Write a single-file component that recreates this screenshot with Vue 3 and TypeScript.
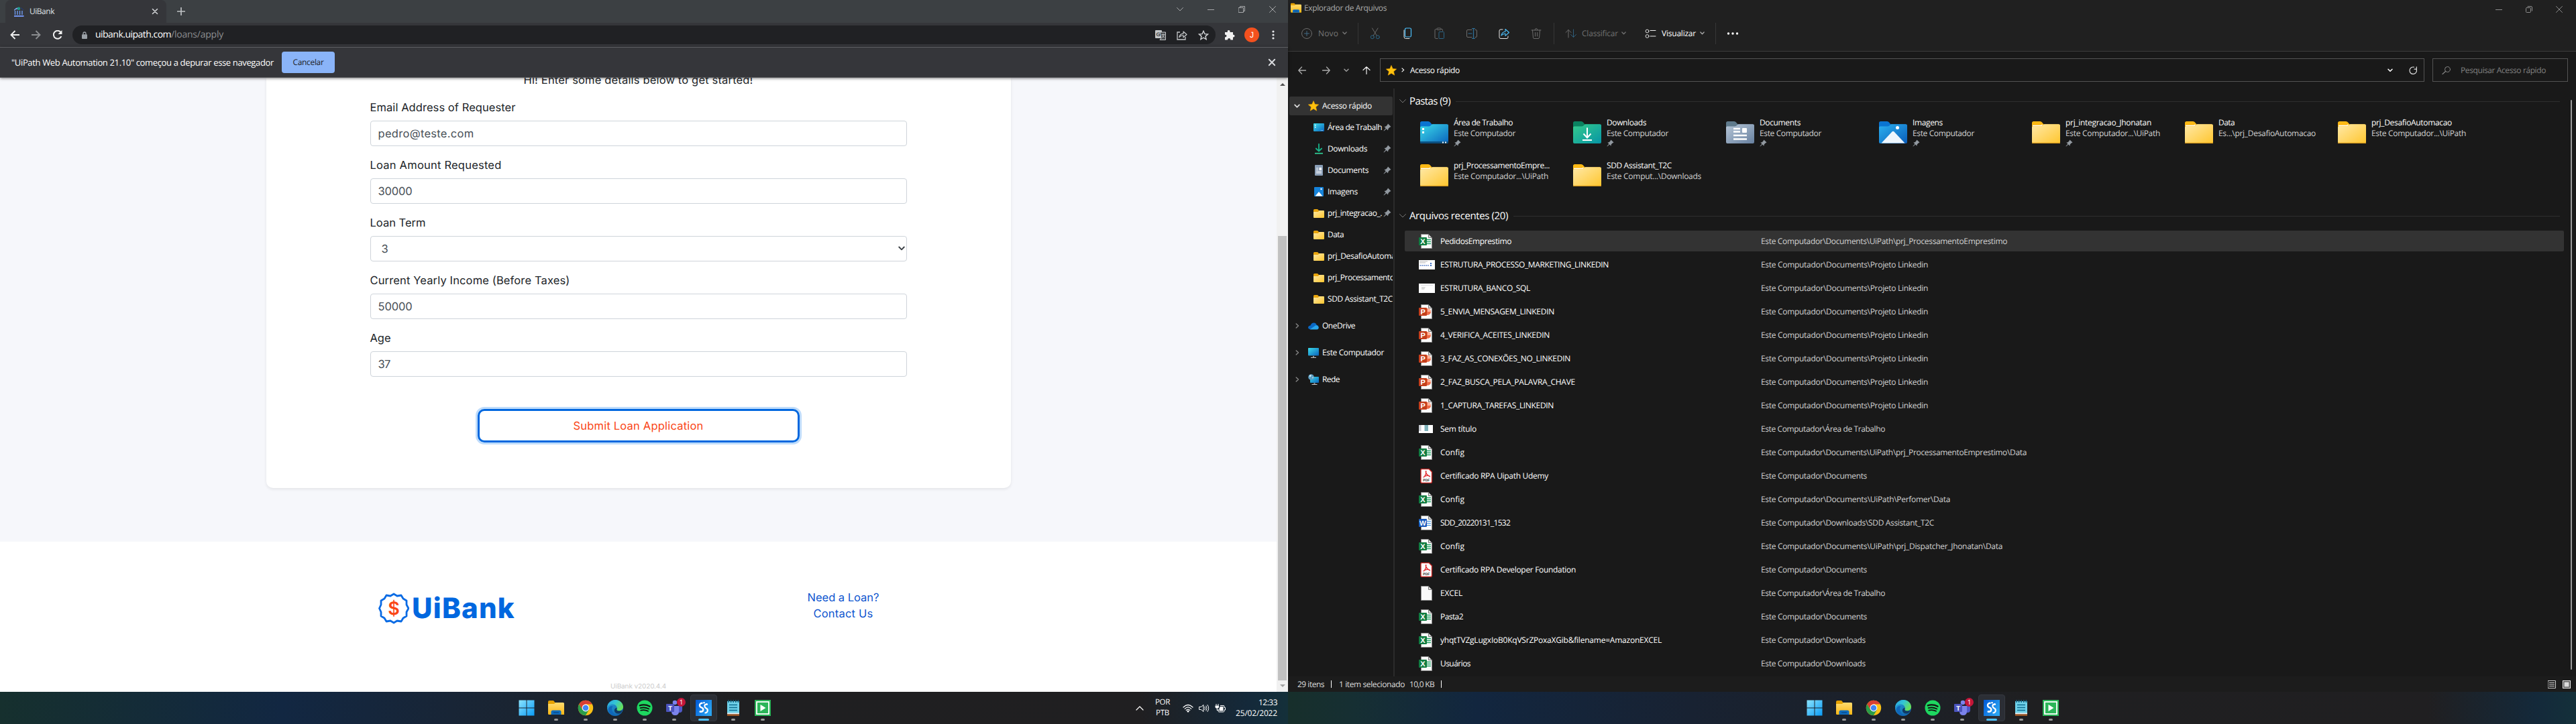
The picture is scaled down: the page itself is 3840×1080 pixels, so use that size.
<script setup lang="ts">
import { h } from 'vue'

// Icon library: [width, height, markup]
const S = 'fill="none" stroke-linecap="round" stroke-linejoin="round"'
const page = '<path d="M3.5.5H14.500L19.500 5.500V21.500H3.500Z" fill="#fafafa" stroke="#8a8a8a"/><path d="M14.500.5V5.500H19.500Z" fill="#ddd" stroke="#777"/>'
const folderBack = (c: string) => `<path d="M0 2.500Q0 0 2.500 0H12Q14 0 15 1.500L17.500 4.500H40V10H0Z" fill="${c}"/>`
const folderFront = (c: string) => `<path d="M0 9Q0 7.500 2 7.500H13Q15 7.500 16.500 5.500Q17.500 4.300 19 4.300H40Q42 4.300 42 6V31Q42 33 40 33H2Q0 33 0 31Z" fill="${c}"/>`
const lib: Record<string, [number, number, string]> = {
  bank: [16, 15, '<path d="M1 4.500Q5 0 9 1.500L10 4Q5 2.500 1 6Z" fill="#7fa8f0"/><circle cx="8" cy="2.800" r="2.200" fill="#1c9d8b"/><path d="M2.500 6V12M6 6V12M9.500 6V12M13 6V12" stroke="#6f9bf0" stroke-width="1.400"/><path d="M1 14H15.500" stroke="#7396f2" stroke-width="2"/><path d="M11 1.500L15 5" stroke="#1c3f8f"/>'],
  close: [10, 10, `<path d="M1.500 1.500L8.500 8.500M8.500 1.500L1.500 8.500" ${S} stroke="currentColor" stroke-width="1.600"/>`],
  winx: [10, 10, `<path d="M.5.500L9.500 9.500M9.500.500L.5 9.500" ${S} stroke="currentColor" stroke-width="1"/>`],
  winmin: [10, 10, '<path d="M0 5.500H10" stroke="currentColor"/>'],
  winres: [10, 10, `<path d="M.5 2.500H7.500V9.500H.5ZM2.500 2.500V.5H9.500V7.500H7.500" ${S} stroke="currentColor"/>`],
  winres11: [10, 10, `<rect x=".5" y="2.500" width="7" height="7" rx="1" ${S} stroke="currentColor"/><path d="M3 .5H8Q9.500.5 9.500 2V7" ${S} stroke="currentColor"/>`],
  plus: [12, 12, '<path d="M6 0V12M0 6H12" stroke="currentColor" stroke-width="1.700"/>'],
  back: [14, 14, '<path d="M14 7H1.500M7.500 1L1.500 7L7.500 13" fill="none" stroke="currentColor" stroke-width="1.900"/>'],
  fwd: [14, 14, '<path d="M0 7H12.500M6.500 1L12.500 7L6.500 13" fill="none" stroke="currentColor" stroke-width="1.900"/>'],
  reload: [14, 14, '<path d="M12.400 9.200A6 6 0 1 1 11.500 3" fill="none" stroke="currentColor" stroke-width="2"/><path d="M13.500 0V6H7.500Z" fill="currentColor"/>'],
  lock: [8, 11, '<path d="M2 5V3.200Q2 1 4 1Q6 1 6 3.200V5" fill="none" stroke="#9aa0a6" stroke-width="1.300"/><rect y="4.200" width="8" height="6.800" rx="1" fill="#9aa0a6"/>'],
  chev: [10, 6, `<path d="M.5.500L5 5L9.500.500" ${S} stroke="currentColor" stroke-width="1"/>`],
  caret: [12, 7, `<path d="M1 6L6 1L11 6" ${S} stroke="currentColor" stroke-width="1.200"/>`],
  chevb: [8, 6, `<path d="M1 1.200L4 4.300L7 1.200" ${S} stroke="currentColor" stroke-width="1.500"/>`],
  chevr: [6, 8, `<path d="M1.200 1L4.500 4L1.200 7" ${S} stroke="currentColor" stroke-width="1.400"/>`],
  translate: [16, 15, '<rect width="10" height="12" rx="1" fill="#c4c7c9"/><path d="M7 3H15.500V14.500H7L9 12Z" fill="#4a4d50" stroke="#c4c7c9"/><text x="1.500" y="9" font-family="Liberation Sans" font-size="8" font-weight="bold" fill="#303134">G</text><path d="M9.500 6.500H14.500M12 5.500V6.500M13.500 6.500Q12.500 10 10 11.500M10.500 7.500Q12 10 14 11.500" fill="none" stroke="#c4c7c9" stroke-width=".9"/>'],
  share: [16, 15, `<path d="M5 3H1V14H13V10" fill="none" stroke="#c4c7c9" stroke-width="1.300"/><path d="M3.800 10.500Q5 5.500 10 5.200V2L15 6.500L10 10.800V7.800Q6.500 7.500 3.800 10.500Z" ${S} stroke="#c4c7c9" stroke-width="1.200"/>`],
  starline: [16, 15, '<path d="M8 1.300L9.900 5.600L14.600 6L11 9.100L12.100 13.700L8 11.200L3.900 13.700L5 9.100L1.400 6L6.100 5.600Z" fill="none" stroke="#d3d5d8" stroke-width="1.400"/>'],
  puzzle: [16, 16, '<path d="M1 4H4.800Q4.300 1 6.600 1Q8.900 1 8.500 4H13V7.800Q15.500 7.500 15.500 9.600Q15.500 11.800 13 11.400V15.500H9.300Q9.400 13 7 13Q4.800 13 4.900 15.500H1V11.500Q3.500 11.500 3.500 9.500Q3.500 7.600 1 7.700Z" fill="#f1f1f1"/>'],
  vdots: [4, 14, '<circle cx="2" cy="2" r="1.600" fill="#e8eaed"/><circle cx="2" cy="7" r="1.600" fill="#e8eaed"/><circle cx="2" cy="12" r="1.600" fill="#e8eaed"/>'],
  badge: [46, 47, '<path d="M23 2L28 5L34 4L37 9L42 12L42 18L45 23.500L42 29L42 35L37 38L34 43L28 42L23 45L18 42L12 43L9 38L4 35L4 29L1.500 23.500L4 18L4 12L9 9L12 4L18 5Z" fill="none" stroke="#0a6be4" stroke-width="2.800" stroke-linejoin="round"/><path d="M33 9L39 18" stroke="#fff" stroke-width="3"/><text x="23" y="33" text-anchor="middle" font-family="Inter, sans-serif" font-size="27" font-weight="600" fill="#fa4616">$</text>'],
  files: [24, 24, '<path d="M0 3Q0 1 2 1H8L10.500 4H22V8H0Z" fill="#e5a100"/><path d="M0 6H9L11 4H22.500Q24 4 24 5.500V22H1.500Q0 22 0 20.500Z" fill="url(#gYel)"/><path d="M4.500 22V18Q4.500 15.500 7 15.500H17Q19.500 15.500 19.500 18V22Z" fill="#0f6cbd"/><path d="M8 18.800H16" stroke="#0a4f90" stroke-width="1.500"/>'],
  win: [24, 24, '<path d="M.5.500H11.500V11.500H.5ZM12.500.500H23.500V11.500H12.500ZM.5 12.500H11.500V23.500H.5ZM12.500 12.500H23.500V23.500H12.500Z" fill="url(#gWin)"/>'],
  chrome: [24, 24, '<circle cx="12" cy="12" r="11.200" fill="#fbc116"/><path d="M2.300 6.400A11.200 11.200 0 0 1 21.700 6.400H12L7.200 14.800Z" fill="#d93f33"/><path d="M2.300 6.400A11.200 11.200 0 0 0 12 23.200L16.900 14.800L12 12L7.200 14.800Z" fill="#2a9d4a"/><circle cx="12" cy="12" r="5.400" fill="#fff"/><circle cx="12" cy="12" r="4.300" fill="#4285f4"/>'],
  edge: [24, 24, '<circle cx="12" cy="12" r="12" fill="url(#gEdge)"/><path d="M0 11C1 4 7 0 12 0C19 0 24 5 24 10.500C24 14 21 16.500 17.500 16.500C14.500 16.500 14 15 14.500 13.500C15.500 9.500 12 6.500 8.500 6.500C4 6.500 1 9 0 11Z" fill="url(#gEdge2)"/><path d="M14.300 14Q14.500 16.500 18 16.500Q20.500 16.500 22.500 15.500Q21.500 20 17 20.500Q12.500 20.500 11 17Q10 13 14.500 11.500Q14.800 12.800 14.300 14Z" fill="#123a63"/><path d="M8.500 9.500Q5.500 14 9 19Q11 22 14.500 23.500Q7 24.500 3 19Q0 14.500 3.500 10.500Q5.500 8.500 8.500 9.500Z" fill="#0f67b9"/>'],
  spotify: [24, 24, '<circle cx="12" cy="12" r="11.500" fill="#1ed760"/><path d="M4.800 8.400Q12.500 6 19.500 9.800" stroke="#111" stroke-width="2.300" fill="none" stroke-linecap="round"/><path d="M5.600 12.200Q12 10.300 18.300 13.500M6.300 15.700Q12 14.200 17 16.800" stroke="#111" stroke-width="1.800" fill="none" stroke-linecap="round"/>'],
  teams: [24, 24, '<circle cx="13" cy="4" r="3.300" fill="#7b83eb"/><circle cx="20.500" cy="5" r="2.500" fill="#5059c9"/><path d="M17 9H24V15Q24 19 20 19H16Z" fill="#5059c9"/><path d="M8 9H19V17Q19 23 13.500 23Q8 23 8 17Z" fill="#7b83eb"/><rect y="6" width="12" height="12" rx="1" fill="#4b53bc"/><text x="6" y="15.500" text-anchor="middle" font-family="Liberation Sans" font-size="10" font-weight="bold" fill="#fff">T</text>'],
  studio: [24, 24, '<rect width="24" height="24" fill="url(#gStu)"/><path d="M10.500 4.800Q5.800 5 6 8.300Q6.300 10.800 9 11.500Q11.500 12.500 11.300 15Q11 17.500 7.500 17.800" stroke="#fff" stroke-width="2.400" fill="none"/><path d="M16.500 6.500Q13.300 6.500 13.300 9.200Q13.500 11.500 15.700 12.500Q18 13.500 17.800 16Q17.500 19.300 13.500 19.500" stroke="#fff" stroke-width="2.200" fill="none"/><circle cx="12.500" cy="4.200" r="1.300" fill="#fff"/><circle cx="16.500" cy="6.500" r="1.600" fill="#fff"/><circle cx="7" cy="17.500" r="1.500" fill="#fff"/>'],
  notepad: [24, 24, '<path d="M3 2H21V21H3Z" fill="#6fd0e8"/><path d="M3 19.500H21V21.500H3Z" fill="#eee"/><path d="M3 21.500H21V23.800H3Z" fill="#a85a24"/><path d="M5 0V4M8.600 0V4M12.200 0V4M15.800 0V4M19.400 0V4" stroke="#0e5f7d" stroke-width="1.500"/><path d="M6 7.500H18M6 11.500H18M6 15.500H18" stroke="#0c6c91" stroke-width="1.500"/>'],
  assist: [24, 24, '<rect width="24" height="24" fill="#2bb558"/><rect x="3" y="3" width="18" height="18" fill="#2bb558" stroke="#fff" stroke-width="1.800"/><path d="M8.500 7L16.500 12L8.500 17Z" fill="#fff"/>'],
  wifi: [16, 13, `<path d="M1 5Q8-2 15 5M3.200 7.300Q8 2.500 12.800 7.300M5.300 9.500Q8 6.800 10.700 9.500" ${S} stroke="#fff" stroke-width="1.200"/><circle cx="8" cy="11" r="1.500" fill="#fff"/>`],
  speaker: [16, 13, `<path d="M1 4.500H3.500L7 1.500V11.500L3.500 8.500H1Z" ${S} stroke="#fff"/><path d="M9 4.500Q10.200 6.500 9 8.500M11 3Q13.300 6.500 11 10M13 1.500Q16.600 6.500 13 11.500" ${S} stroke="#fff"/>`],
  battery: [16, 13, '<path d="M2 0V2.500M5 0V2.500" stroke="#fff"/><path d="M.5 2.500H6V5Q6 6.500 3.300 6.500Q.5 6.500.5 5Z" fill="#fff"/><path d="M3.200 6V9.500H5.500" fill="none" stroke="#fff"/><path d="M8 2.500H13Q14 2.500 14 4V5.500H15.500V9H14V10.500Q14 12 12.500 12H6Q5 12 5 10.500V8" fill="none" stroke="#fff"/><path d="M7.500 4H12.500V10.500H6.500V7Q7.500 6 7.500 4Z" fill="#fff"/>'],
  star: [16, 16, '<path d="M8 0.500L10.200 5.600L15.700 6L11.500 9.700L12.800 15.200L8 12.300L3.200 15.200L4.500 9.700L.3 6L5.800 5.600Z" fill="#ffc20e" stroke="#eca400" stroke-width=".6"/>'],
  newc: [18, 18, `<circle cx="9" cy="9" r="7.500" ${S} stroke="#6c6c6c"/><path d="M9 5.500V12.500M5.500 9H12.500" ${S} stroke="#426b85"/>`],
  cut: [18, 18, `<path d="M4.500 1L11.500 12.500M13 1L6 12.500" ${S} stroke="#6c6c6c"/><circle cx="4.800" cy="14.300" r="2.500" ${S} stroke="#2b6485"/><circle cx="12.900" cy="14.300" r="2.500" ${S} stroke="#2b6485"/>`],
  copy: [18, 18, `<path d="M4 4V14Q4 16.500 6.500 16.500H12" ${S} stroke="#e0e0e0"/><rect x="5.500" y="1" width="9" height="13" rx="1.800" ${S} stroke="#4cc2ff" stroke-width="1.200"/>`],
  paste: [18, 18, `<path d="M13.500 5V3.500Q13.500 2.500 12 2.500H3.500Q2 2.500 2 4V15Q2 16.500 3.500 16.500H6" ${S} stroke="#6c6c6c"/><rect x="5" y="1" width="6" height="2.500" rx="1" fill="#202020" stroke="#6c6c6c"/><rect x="8" y="6.500" width="7.500" height="10" rx="1" ${S} stroke="#2b6485"/>`],
  rename: [18, 18, `<path d="M9 3.500H3Q1.500 3.500 1.500 5V13Q1.500 14.500 3 14.500H9M14 3.500H15Q16.500 3.500 16.500 5V13Q16.500 14.500 15 14.500H14" ${S} stroke="#6c6c6c"/><path d="M11.500 1.500V16.500M9.500 1.500H13.500M9.500 16.500H13.500M4 9H9" ${S} stroke="#2f719a" stroke-width="1.200"/>`],
  xshare: [18, 18, `<path d="M7 3H4Q2 3 2 5V14.500Q2 16.500 4 16.500H13Q15 16.500 15 14.500V13" ${S} stroke="#e8e8e8"/><path d="M5 12Q6 6.500 11 6.300V2.500L16.500 7.500L11 12.300V9.200Q7.500 9 5 12Z" ${S} stroke="#4cc2ff" stroke-width="1.100"/>`],
  trash: [18, 18, `<path d="M2 4H16M7 4Q7 1.500 9 1.500Q11 1.500 11 4M3.500 4L4.500 15.500Q4.600 16.500 6 16.500H12Q13.400 16.500 13.500 15.500L14.500 4M7.500 7.500V13M10.500 7.500V13" ${S} stroke="#6c6c6c"/>`],
  sort: [18, 14, `<path d="M5 13V1.500M1 5.500L5 1.500L9 5.500" ${S} stroke="#6c6c6c"/><path d="M12.500 1V12.500M8.500 8.500L12.500 12.500L16.500 8.500" ${S} stroke="#2f5f7c"/>`],
  view: [17, 14, `<circle cx="3.500" cy="3.500" r="2.400" ${S} stroke="#ddd"/><circle cx="3.500" cy="11" r="2.400" ${S} stroke="#ddd"/><path d="M8 2.500H16M8 11H16" ${S} stroke="#eee"/>`],
  hdots: [18, 4, '<circle cx="2.500" cy="2" r="1.700" fill="#fff"/><circle cx="9" cy="2" r="1.700" fill="#fff"/><circle cx="15.500" cy="2" r="1.700" fill="#fff"/>'],
  xback: [12, 12, `<path d="M11.500 6H.8M5.500 1L.8 6L5.500 11" ${S} stroke="#aaa" stroke-width="1.300"/>`],
  xfwd: [12, 12, `<path d="M.5 6H11.200M6.500 1L11.200 6L6.500 11" ${S} stroke="#aaa" stroke-width="1.300"/>`],
  xup: [12, 12, `<path d="M6 11.500V.8M1 5.500L6 .8L11 5.500" ${S} stroke="#eee" stroke-width="1.200"/>`],
  xrefresh: [12, 12, `<path d="M11 4.200A5.200 5.200 0 1 1 7.500 1.200" ${S} stroke="#ddd" stroke-width="1.200"/><path d="M8 4.200H11.300V.8" ${S} stroke="#ddd" stroke-width="1.200"/>`],
  search: [14, 12, `<circle cx="8.500" cy="4.500" r="4" ${S} stroke="#888"/><path d="M5.500 7.500L1 11.500" ${S} stroke="#888" stroke-width="1.200"/>`],
  pin: [12, 12, '<path d="M7 .5L11.500 5L9.500 6L7.500 8L7 10.500L4.700 8.200L1 11.500L.5 11L3.800 7.300L1.500 5L4 4.500L6 2.500Z" fill="#9299a0"/>'],
  sdesk: [16, 12, '<rect width="16" height="12" rx="1" fill="url(#gDesk)"/><path d="M2 2H3.500V3.500H2ZM2 5H3.500V6.500H2Z" fill="#fff"/><path d="M11 10.500H12M13 10.500H14" stroke="#bde"/>'],
  sdown: [14, 16, `<path d="M7 1V11M2.800 7.500L7 11.500L11.200 7.500" ${S} stroke="#18b389" stroke-width="1.800"/><path d="M1 14.800H13" stroke="#2fc490" stroke-width="1.800"/>`],
  sdoc: [14, 16, '<rect x="1" width="12" height="16" rx="1" fill="#8b9fb7"/><path d="M3 5H6M3 7.500H6M3 10H11M3 12H11" stroke="#fff" stroke-width="1.200"/><path d="M7.500 4H11V8H7.500Z" fill="#fff"/>'],
  simg: [14, 14, '<rect width="14" height="14" rx="1" fill="#1583da"/><path d="M1.500 13.500L7 7L12.500 13.500Z" fill="#fff"/><circle cx="10.500" cy="3" r="1.200" fill="#fff"/>'],
  sfold: [16, 13, '<path d="M0 1.500Q0 0 1.500 0H6L8 2H14V6H0Z" fill="#e8a40c"/><path d="M0 4H7L8.500 2H15Q16 2 16 3V12Q16 13 15 13H1Q0 13 0 12Z" fill="url(#gFold)"/>'],
  cloud: [16, 11, '<path d="M2 10Q-1 9 .5 6Q1.500 4.500 3.500 4.500Q5 .5 8.500.5Q12 .5 12.700 4Q15.500 4 15.500 7Q15 10 12 10Z" fill="#0a68c4"/><path d="M2.500 10.500L9.500 5.500Q12 3.500 14 5Q16.500 7 15.500 9Q14.500 10.500 13 10.500Z" fill="#29a5ea"/>'],
  pc: [16, 15, '<rect width="16" height="11.500" rx=".8" fill="url(#gDesk)"/><path d="M8 12V14" stroke="#888" stroke-width="2"/><path d="M4 14.400H12" stroke="#ccc"/>'],
  net: [16, 16, '<rect x="3" y="4" width="13" height="9" rx=".8" fill="url(#gDesk)"/><path d="M9.500 13V15" stroke="#888" stroke-width="2"/><path d="M5.500 15.500H13.500" stroke="#ccc"/><circle cx="4.500" cy="4.500" r="4.300" fill="#5c9fc4"/><path d="M2 2Q4 0 5 2Q4 4.500 2 4.500ZM6 5L8 4L7 7Z" fill="#cfe6f2"/>'],
  fdesk: [42, 33, folderBack('#0a74d1') + folderFront('url(#gDesk)') + '<path d="M0 30H42V31.500Q42 33 40 33H2Q0 33 0 31.500Z" fill="#0b4f80"/><path d="M3 10H6V13H3ZM3 15H6V18H3ZM33 30.500H35V32.500H33ZM37 30.500H39V32.500H37Z" fill="#fff"/>'],
  fdown: [42, 33, folderBack('#0a8260') + folderFront('url(#gGreen)') + '<path d="M21 9.500V24M15.500 18.500L21 24.500L26.500 18.500M14 28H28" fill="none" stroke="#fff" stroke-width="2"/>'],
  fdoc: [42, 33, folderBack('#5f7a8c') + folderFront('url(#gGray)') + '<path d="M11 11H21M11 15.500H21M11 21H31M11 26.500H31" stroke="#fff" stroke-width="2.300"/><rect x="24" y="10" width="7" height="7" rx="1" fill="#fff"/>'],
  fimg: [42, 33, folderBack('#0a74d1') + folderFront('url(#gBlue)') + '<path d="M3.500 32.500L19.500 15.500Q21 14 22.500 15.500L38.500 32.500Z" fill="#eef6fd"/><circle cx="27.500" cy="9.500" r="2.500" fill="#fff"/>'],
  fold: [42, 33, folderBack('#fdb813') + folderFront('url(#gFold)') + '<path d="M1 6.500H13.500L15.500 5" stroke="#fff" stroke-width="1.500" fill="none"/><path d="M0 32.300H42" stroke="#d89a1c" stroke-width="1.200"/>'],
  xls: [22, 22, page + '<path d="M12 8.500H18M12 11.500H18M12 14.500H18" stroke="#21a366" stroke-width="1.400"/><rect y="5" width="12" height="12" rx="1" fill="#107c41"/><text x="6" y="15" text-anchor="middle" font-family="Liberation Sans" font-size="11" font-weight="bold" fill="#fff">X</text>'],
  ppt: [22, 22, page + '<circle cx="13" cy="11" r="5" fill="#ed6c47"/><path d="M13 11V6A5 5 0 0 1 18 11Z" fill="#ffb49c"/><rect y="5" width="12" height="12" rx="1" fill="#c43e1c"/><text x="6.200" y="15" text-anchor="middle" font-family="Liberation Sans" font-size="11" font-weight="bold" fill="#fff">P</text>'],
  doc: [22, 22, page + '<path d="M12 8.500H18M12 11.500H18M12 14.500H18" stroke="#2b8ce0" stroke-width="1.200"/><rect y="5" width="12" height="12" rx="1" fill="#185abd"/><text x="6" y="15" text-anchor="middle" font-family="Liberation Sans" font-size="10.500" font-weight="bold" fill="#fff">W</text>'],
  pdf: [22, 22, '<path d="M4.500.5H15L19.500 5V19.500Q19.500 21.500 17.500 21.500H4.500Q3 21.500 3 19.500V2.500Q3 .5 4.500.5Z" fill="#fafafa" stroke="#c5221f" stroke-width="1.300"/><path d="M11 4Q9.800 3 10.500 6Q11.500 9 15.500 11.500Q17.500 12.500 15.500 10.800Q11 9.500 7.500 12.500Q6 13.500 8.500 11.800Q11 8.500 11 4Z" fill="none" stroke="#e5252a" stroke-width="1.200"/><text x="11.300" y="19" text-anchor="middle" font-family="Liberation Sans" font-size="5" font-weight="bold" fill="#333">PDF</text>'],
  blank: [22, 22, page],
  thumbA: [24, 22, '<rect y="4" width="24" height="14" fill="#fff"/><path d="M1 6H13M1 8H10" stroke="#bbb"/><path d="M1.500 12H15" stroke="#5b82c9" stroke-width="1.500" stroke-dasharray="2 1"/><path d="M18 8V13" stroke="#3a6cc4" stroke-width="2" stroke-dasharray="2 1"/>'],
  thumbB: [24, 22, '<rect y="4" width="24" height="14" fill="#fff"/><path d="M3 6.500H21" stroke="#e3e3e6" stroke-width="1.500"/><path d="M4 9H10L8 13H4Z" fill="#ddd"/>'],
  thumbC: [24, 22, '<rect y="5" width="21" height="12" fill="#fff"/><path d="M0 5H3.500V14H0Z" fill="#c8ccd2"/><path d="M8.500 5H14V14H8.500Z" fill="#7fb3bb"/>'],
  lay1: [12, 12, `<rect x=".5" y=".5" width="11" height="11" ${S} stroke="#ccc"/><path d="M2 3.500H10M2 6H10M2 8.500H10" stroke="#ccc"/>`],
  lay2: [12, 12, `<rect x=".5" y=".5" width="11" height="11" fill="#555" stroke="#eee"/><rect x="2.500" y="2.500" width="7" height="7" fill="#ddd"/>`],
  tri: [8, 4, '<path d="M0 4L4 0L8 4Z" fill="currentColor"/>'],
  trid: [8, 4, '<path d="M0 0L4 4L8 0Z" fill="currentColor"/>'],
}
const Ico = (p: { n: string; w?: number }) => {
  const [w, ht, body] = lib[p.n]
  const width = Number(p.w ?? w)
  return h('svg', { viewBox: `0 0 ${w} ${ht}`, width, height: (ht * width) / w, innerHTML: body, style: 'flex:none;display:block' })
}
Ico.props = ['n', 'w']

// Spreads or tightens the letters of a text so that it takes the given width.
const vFit = {
  mounted(el: HTMLElement, b: { value: number }) {
    if (!b.value) return
    const n = [...(el.textContent ?? '')].length
    const w = el.getBoundingClientRect().width
    if (n > 0) el.style.letterSpacing = `${((b.value - w) / n).toFixed(3)}px`
  },
}

const fields = [
  { label: 'Email Address of Requester', lw: 217, value: 'pedro@teste.com', vw: 143 },
  { label: 'Loan Amount Requested', lw: 196, value: '30000', vw: 51 },
  { label: 'Loan Term', lw: 83, value: '3', vw: 9, select: true },
  { label: 'Current Yearly Income (Before Taxes)', lw: 298, value: '50000', vw: 51 },
  { label: 'Age', lw: 31, value: '37', vw: 18 },
]
const apps = ['win', 'files', 'chrome', 'edge', 'spotify', 'teams', 'studio', 'notepad', 'assist']
const tools = ['cut', 'copy', 'paste', 'rename', 'xshare', 'trash']
const side = [
  { icon: 'sdesk', text: 'Área de Trabalh', w: 81, pin: true },
  { icon: 'sdown', text: 'Downloads', w: 59, pin: true },
  { icon: 'sdoc', text: 'Documents', w: 61, pin: true },
  { icon: 'simg', text: 'Imagens', w: 45, pin: true },
  { icon: 'sfold', text: 'prj_integracao_.', w: 81, pin: true },
  { icon: 'sfold', text: 'Data', w: 24 },
  { icon: 'sfold', text: 'prj_DesafioAutomacao', w: 120 },
  { icon: 'sfold', text: 'prj_ProcessamentoEmprestimo', w: 163 },
  { icon: 'sfold', text: 'SDD Assistant_T2C', w: 97 },
]
const roots = [
  { icon: 'cloud', text: 'OneDrive', w: 49 },
  { icon: 'pc', text: 'Este Computador', w: 92 },
  { icon: 'net', text: 'Rede', w: 26 },
]
const folders = [
  { icon: 'fdesk', name: 'Área de Trabalho', w: 88, path: 'Este Computador', pw: 92, pin: true },
  { icon: 'fdown', name: 'Downloads', w: 59, path: 'Este Computador', pw: 92, pin: true },
  { icon: 'fdoc', name: 'Documents', w: 61, path: 'Este Computador', pw: 92, pin: true },
  { icon: 'fimg', name: 'Imagens', w: 45, path: 'Este Computador', pw: 92, pin: true },
  { icon: 'fold', name: 'prj_integracao_Jhonatan', w: 128, path: 'Este Computador...\\UiPath', pw: 141, pin: true },
  { icon: 'fold', name: 'Data', w: 24, path: 'Es...\\prj_DesafioAutomacao', pw: 145 },
  { icon: 'fold', name: 'prj_DesafioAutomacao', w: 120, path: 'Este Computador...\\UiPath', pw: 141 },
  { icon: 'fold', name: 'prj_ProcessamentoEmpre...', w: 143, path: 'Este Computador...\\UiPath', pw: 141 },
  { icon: 'fold', name: 'SDD Assistant_T2C', w: 97, path: 'Este Comput...\\Downloads', pw: 141 },
]
const E = 'Este Computador\\'
const files: [string, string, number, string, number][] = [
  ['xls', 'PedidosEmprestimo', 106, E + 'Documents\\UiPath\\prj_ProcessamentoEmprestimo', 367],
  ['thumbA', 'ESTRUTURA_PROCESSO_MARKETING_LINKEDIN', 251, E + 'Documents\\Projeto Linkedin', 249],
  ['thumbB', 'ESTRUTURA_BANCO_SQL', 134, E + 'Documents\\Projeto Linkedin', 249],
  ['ppt', '5_ENVIA_MENSAGEM_LINKEDIN', 170, E + 'Documents\\Projeto Linkedin', 249],
  ['ppt', '4_VERIFICA_ACEITES_LINKEDIN', 163, E + 'Documents\\Projeto Linkedin', 249],
  ['ppt', '3_FAZ_AS_CONEXÕES_NO_LINKEDIN', 194, E + 'Documents\\Projeto Linkedin', 249],
  ['ppt', '2_FAZ_BUSCA_PELA_PALAVRA_CHAVE', 201, E + 'Documents\\Projeto Linkedin', 249],
  ['ppt', '1_CAPTURA_TAREFAS_LINKEDIN', 169, E + 'Documents\\Projeto Linkedin', 249],
  ['thumbC', 'Sem título', 54, E + 'Área de Trabalho', 185],
  ['xls', 'Config', 36, E + 'Documents\\UiPath\\prj_ProcessamentoEmprestimo\\Data', 396],
  ['pdf', 'Certificado RPA Uipath Udemy', 161, E + 'Documents', 158],
  ['xls', 'Config', 36, E + 'Documents\\UiPath\\Perfomer\\Data', 282],
  ['doc', 'SDD_20220131_1532', 104, E + 'Downloads\\SDD Assistant_T2C', 258],
  ['xls', 'Config', 36, E + 'Documents\\UiPath\\prj_Dispatcher_Jhonatan\\Data', 360],
  ['pdf', 'Certificado RPA Developer Foundation', 202, E + 'Documents', 158],
  ['blank', 'EXCEL', 33, E + 'Área de Trabalho', 185],
  ['xls', 'Pasta2', 34, E + 'Documents', 158],
  ['xls', 'yhqtTVZgLugxIoB0KqVSrZPoxaXGib&filename=AmazonEXCEL', 330, E + 'Downloads', 156],
  ['xls', 'Usuários', 45, E + 'Downloads', 156],
]
</script>

<template>
  <div class="desk">
    <svg width="0" height="0" class="defs">
      <linearGradient id="gYel" x1="0" y1="0" x2="0" y2="1"><stop stop-color="#ffdc70" /><stop offset="1" stop-color="#fbb714" /></linearGradient>
      <linearGradient id="gFold" x1="0" y1="0" x2="1" y2="1"><stop stop-color="#ffe9a8" /><stop offset="1" stop-color="#ffc62e" /></linearGradient>
      <linearGradient id="gWin" x1="0" y1="0" x2="1" y2="1"><stop stop-color="#8be4ff" /><stop offset="1" stop-color="#0a9bf5" /></linearGradient>
      <linearGradient id="gDesk" x1="0" y1="0" x2="1" y2="1"><stop stop-color="#3cdcea" /><stop offset="1" stop-color="#0a63bd" /></linearGradient>
      <linearGradient id="gGreen" x1="0" y1="0" x2="1" y2="1"><stop stop-color="#35cb8c" /><stop offset="1" stop-color="#0695a5" /></linearGradient>
      <linearGradient id="gGray" x1="0" y1="0" x2="1" y2="1"><stop stop-color="#b7c7d8" /><stop offset="1" stop-color="#67809f" /></linearGradient>
      <linearGradient id="gBlue" x1="0" y1="0" x2="1" y2="1"><stop stop-color="#2bb1f0" /><stop offset="1" stop-color="#0a5cb8" /></linearGradient>
      <linearGradient id="gEdge" x1="0" y1="0" x2="1" y2="1"><stop stop-color="#2aa7dd" /><stop offset="1" stop-color="#0c59a4" /></linearGradient>
      <linearGradient id="gEdge2" x1="0" y1="0" x2="1" y2=".5"><stop stop-color="#2b9fe0" /><stop offset=".5" stop-color="#33c5d6" /><stop offset="1" stop-color="#66e05a" /></linearGradient>
      <linearGradient id="gStu" x1="0" y1="0" x2="1" y2=".6"><stop stop-color="#0057d6" /><stop offset="1" stop-color="#2aa4f2" /></linearGradient>
    </svg>

    <section class="mon">
      <div class="browser">
        <div class="tabs">
          <div class="tab"><Ico n="bank" /><span v-fit="37" class="tt">UiBank</span><Ico n="close" class="tx" /></div>
          <Ico n="plus" class="plus" />
          <div class="wc"><Ico n="chev" /><Ico n="winmin" /><Ico n="winres" /><Ico n="winx" /></div>
        </div>
        <div class="bar">
          <div class="nav"><Ico n="back" /><Ico n="fwd" class="dim" /><Ico n="reload" /></div>
          <div class="omni">
            <Ico n="lock" />
            <div class="url"><span v-fit="113" class="t">uibank.uipath.com</span><span v-fit="78" class="t dim">/loans/apply</span></div>
            <div class="oi"><Ico n="translate" /><Ico n="share" /><Ico n="starline" /></div>
          </div>
          <div class="ext"><Ico n="puzzle" /><b class="ava">J</b><Ico n="vdots" /></div>
        </div>
        <div class="info">
          <span v-fit="391" class="t">"UiPath Web Automation 21.10" começou a depurar esse navegador</span>
          <div class="cancel"><span v-fit="46" class="t">Cancelar</span></div>
          <Ico n="close" w="12" class="ix" />
        </div>
        <div class="view">
          <div class="web">
            <div class="sect">
              <div class="card">
                <div class="intro"><span v-fit="342" class="t">Hi! Enter some details below to get started!</span></div>
                <div v-for="f in fields" :key="f.label" class="field">
                  <div class="lab"><span v-fit="f.lw" class="t">{{ f.label }}</span></div>
                  <div class="inp" :class="{ sel: f.select }"><span v-fit="f.vw" class="t">{{ f.value }}</span><Ico v-if="f.select" n="chevb" w="10" /></div>
                </div>
                <div class="submit"><span v-fit="194" class="t">Submit Loan Application</span></div>
              </div>
            </div>
            <div class="foot">
              <div class="cols">
                <div class="logo"><Ico n="badge" /><span v-fit="154" class="t">UiBank</span></div>
                <div class="links"><span v-fit="107" class="t">Need a Loan?</span><span v-fit="89" class="t">Contact Us</span></div>
              </div>
              <div class="ver"><span v-fit="83" class="t">UiBank v2020.4.4</span></div>
            </div>
          </div>
          <div class="sb"><Ico n="tri" class="up" /><div class="thumb"></div><Ico n="trid" class="dn" /></div>
        </div>
      </div>
      <div class="task t1">
        <div v-for="(a, i) in apps" :key="a" class="app" :class="{ on: a === 'studio' }">
          <Ico :n="a" /><i v-if="i" class="ind"></i><b v-if="a === 'teams'" class="num">1</b>
        </div>
        <div class="tray">
          <Ico n="caret" />
          <div class="lang"><span>POR</span><span>PTB</span></div>
          <div class="sys"><Ico n="wifi" /><Ico n="speaker" /><Ico n="battery" /></div>
          <div class="clock"><span v-fit="28" class="t">12:33</span><span v-fit="62" class="t">25/02/2022</span></div>
        </div>
      </div>
    </section>

    <section class="mon">
      <div class="exp">
        <div class="xt"><Ico n="files" w="16" /><span v-fit="123" class="t">Explorador de Arquivos</span>
          <div class="xw"><Ico n="winmin" /><Ico n="winres11" /><Ico n="winx" /></div>
        </div>
        <div class="cmd">
          <div class="novo"><Ico n="newc" /><span v-fit="30" class="t">Novo</span><Ico n="chevb" w="7" /></div>
          <i class="sep"></i>
          <div v-for="t in tools" :key="t" class="tool"><Ico :n="t" /></div>
          <i class="sep"></i>
          <div class="sort"><Ico n="sort" /><span v-fit="54" class="t">Classificar</span><Ico n="chevb" w="7" /></div>
          <div class="vis"><Ico n="view" /><span v-fit="51" class="t">Visualizar</span><Ico n="chevb" w="7" /></div>
          <i class="sep"></i>
          <Ico n="hdots" class="more" />
        </div>
        <div class="addr">
          <div class="xnav"><Ico n="xback" /><Ico n="xfwd" /><Ico n="chevb" /><Ico n="xup" /></div>
          <div class="abox"><Ico n="star" /><Ico n="chevr" w="5" /><span v-fit="74" class="t">Acesso rápido</span><Ico n="chevb" class="ac" /><Ico n="xrefresh" /></div>
          <div class="sbox"><Ico n="search" /><span v-fit="127" class="t">Pesquisar Acesso rápido</span></div>
        </div>
        <div class="body">
          <div class="side">
            <div class="root cur"><Ico n="chevb" w="9" /><Ico n="star" /><span v-fit="74" class="t">Acesso rápido</span></div>
            <div v-for="s in side" :key="s.text" class="kid"><div class="ki"><Ico :n="s.icon" /></div><span v-fit="s.w" class="t">{{ s.text }}</span><Ico v-if="s.pin" n="pin" class="pin" /></div>
            <div v-for="r in roots" :key="r.text" class="root far"><Ico n="chevr" /><Ico :n="r.icon" /><span v-fit="r.w" class="t">{{ r.text }}</span></div>
          </div>
          <div class="main">
            <div class="gh"><Ico n="chev" /><span v-fit="61" class="t">Pastas (9)</span><i></i></div>
            <div class="grid">
              <div v-for="f in folders" :key="f.name" class="fo">
                <Ico :n="f.icon" />
                <div class="ft"><span v-fit="f.w" class="t">{{ f.name }}</span><span v-fit="f.pw" class="t sub">{{ f.path }}</span><Ico v-if="f.pin" n="pin" w="11" /></div>
              </div>
            </div>
            <div class="gh"><Ico n="chev" /><span v-fit="147" class="t">Arquivos recentes (20)</span><i></i></div>
            <div class="rows">
              <div v-for="(f, i) in files" :key="i" class="row" :class="{ pick: i === 0 }">
                <div class="ri"><Ico :n="f[0]" /></div>
                <div class="rn"><span v-fit="f[2]" class="t">{{ f[1] }}</span></div>
                <span v-fit="f[4]" class="t sub">{{ f[3] }}</span>
              </div>
            </div>
          </div>
          <div class="xs"></div>
        </div>
        <div class="stat"><span v-fit="40" class="t">29 itens</span><i></i><span v-fit="98" class="t">1 item selecionado</span><span v-fit="37" class="t kb">10,0 KB</span><i></i>
          <div class="lay"><Ico n="lay1" /><Ico n="lay2" /></div>
        </div>
      </div>
      <div class="task t2">
        <div v-for="(a, i) in apps" :key="a" class="app" :class="{ on: a === 'studio' }">
          <Ico :n="a" /><i v-if="i" class="ind"></i><b v-if="a === 'teams'" class="num">1</b>
        </div>
      </div>
    </section>
  </div>
</template>

<style>
body { background: #191919; overflow: hidden; }
</style>

<style scoped>
* { box-sizing: border-box; }
.defs { position: absolute; }
.desk { display: flex; width: 3840px; height: 1080px; font: 12px/16px "Open Sans", "Noto Sans", sans-serif; text-rendering: geometricPrecision; overflow: hidden; }
.mon { width: 1920px; height: 1080px; display: flex; flex-direction: column; }
.t, .tt { display: inline-block; white-space: nowrap; flex: none; }

.browser { height: 1032px; display: flex; flex-direction: column; background: #35363a; color: #fff; }
.tabs { height: 34px; background: #3c4043; display: flex; align-items: center; padding-left: 8px; }
.tab { width: 240px; height: 34px; background: #35363a; border-radius: 8px 8px 0 0; display: flex; align-items: center; padding: 0 12px; color: #dfe1e5; }
.tt { margin-left: 8px; }
.tx { margin-left: auto; color: #d0d2d5; }
.plus { margin-left: 16px; color: #bfc2c5; }
.wc { margin-left: auto; display: flex; gap: 36px; padding: 0 18px 6px 0; color: #a7a9ab; align-items: center; }
.bar { height: 36px; display: flex; align-items: center; }
.nav { width: 108px; display: flex; gap: 18px; padding-left: 15px; color: #f1f1f1; }
.dim { color: #8b8d90; }
.omni { width: 1704px; height: 28px; background: #202124; border-radius: 14px; display: flex; align-items: center; padding-left: 14px; }
.url { margin-left: 12px; font-size: 14px; display: flex; }
.oi { margin-left: auto; display: flex; gap: 16px; padding-right: 10px; }
.ext { display: flex; align-items: center; padding-left: 13px; }
.ava { width: 22px; height: 22px; border-radius: 50%; background: #f4511e; font: 12px/22px "Liberation Sans", sans-serif; text-align: center; margin: 0 19px 0 14px; }
.info { height: 46px; border-top: 1px solid #5f6165; border-bottom: 1px solid #56575a; display: flex; align-items: center; padding: 0 18px 0 17px; font-size: 13px; position: relative; background: #35363a; box-shadow: 0 1px 4px rgba(0, 0, 0, .5); z-index: 1; }
.cancel { width: 79px; height: 32px; background: #8ab4f8; border-radius: 4px; margin-left: 12px; color: #202124; font-size: 12px; display: flex; align-items: center; justify-content: center; }
.ix { margin-left: auto; color: #dadce0; }
.view { height: 916px; display: flex; overflow: hidden; font-family: Inter, sans-serif; color: #212529; }
.web { width: 1903px; background: #fff; }
.sect { height: 692px; background: #f6f7fb; display: flex; justify-content: center; }
.card { width: 1110px; height: 612px; background: #fff; border-radius: 0 0 10px 10px; box-shadow: 0 2px 4px rgba(0, 0, 0, .08); padding: 0 155px; font-size: 16.500px; line-height: 24px; }
.intro { text-align: center; height: 24px; margin-top: -9px; }
.field { height: 86px; padding-top: 16px; }
.lab { height: 24px; }
.inp { height: 38px; margin-top: 8px; border: 1px solid #ced4da; border-radius: 4px; color: #495057; display: flex; align-items: center; padding: 0 2px 0 11px; }
.sel { padding-left: 16px; }
.sel > svg { margin-left: auto; color: #3a3f45; }
.submit { width: 480px; height: 50px; margin: 49px auto 0; border: 3px solid #0067df; border-radius: 10px; box-shadow: 0 0 0 3px #bfdcfb; color: #fa4616; display: flex; align-items: center; justify-content: center; }
.intro + .field { padding-top: 17px; height: 87px; }
.intro ~ .submit { margin-top: 48px; }
.lab .t { margin-top: -1px; }
.submit .t { padding-bottom: 1px; }
.foot { height: 224px; display: flex; flex-direction: column; }
.cols { display: flex; padding-top: 76px; height: 208px; align-items: flex-start; }
.logo { width: 1107px; padding-left: 564px; display: flex; align-items: center; color: #0067df; }
.logo .t { font-size: 42px; line-height: 47px; font-weight: 800; margin-left: 4px; }
.links { width: 300px; display: flex; flex-direction: column; align-items: center; font-size: 16.500px; line-height: 24px; color: #0d55cf; margin-top: -5px; }
.ver { text-align: center; font-size: 10px; line-height: 16px; color: #ccc; }
.sb { width: 17px; background: #f1f1f1; display: flex; flex-direction: column; align-items: center; color: #505050; }
.up { margin-top: 8px; }
.thumb { width: 13px; height: 663px; margin-top: 224px; background: #c1c1c1; }
.dn { margin-top: 6px; color: #a3a3a3; }

.task { height: 48px; display: flex; align-items: center; padding-left: 765px; gap: 4px; }
.t1 { background: linear-gradient(90deg, #16302e 0, #122742 420px, #1b2430 800px, #1f1f21 1100px, #201f21 1700px, #14293a 1860px, #14303a 1920px); }
.t2 { background: linear-gradient(90deg, #172f2b 0, #162f33 100px, #12263f 280px, #182232 600px, #1f1f21 1100px, #201f21 1700px, #14293a 1860px, #14303a 1920px); }
.app { width: 40px; height: 40px; border-radius: 4px; border: 1px solid transparent; display: flex; align-items: center; justify-content: center; position: relative; }
.on { background: #2b2e35; border-color: #363940; }
.ind { position: absolute; bottom: 0; left: 16px; width: 6px; height: 3px; border-radius: 2px; background: #9a9a9a; }
.on .ind { left: 11px; width: 16px; background: #4cc2ff; }
.num { position: absolute; top: 4px; right: 2px; width: 13px; height: 13px; border-radius: 50%; background: #c4163a; color: #fff; font: 10px/13px "Open Sans", sans-serif; text-align: center; }
.tray { margin-left: auto; display: flex; align-items: center; color: #fff; padding-right: 16px; }
.lang { width: 26px; margin-left: 15px; text-align: center; font-size: 11.500px; display: flex; flex-direction: column; letter-spacing: -.3px; }
.sys { display: flex; gap: 8px; margin-left: 17px; }
.clock { display: flex; flex-direction: column; align-items: flex-end; margin-left: 15px; }

.exp { height: 1032px; background: #191919; color: #fff; display: flex; flex-direction: column; }
.xt { height: 28px; background: #202020; display: flex; align-items: center; padding: 0 0 5px 4px; color: #a9a9a9; }
.xt > .t { margin-left: 4px; }
.xw { margin-left: auto; display: flex; gap: 35px; padding: 5px 20px 0 0; color: #8d8d8d; }
.cmd { height: 49px; background: #202020; border-bottom: 1px solid #3b3b3b; display: flex; align-items: center; padding-bottom: 4px; color: #8a8a8a; }
.novo { width: 104px; display: flex; align-items: center; padding-left: 19px; color: #777; }
.novo .t { margin: 0 6px 0 8px; }
.sep { width: 1px; height: 32px; background: #363636; }
.tool { width: 48px; display: flex; justify-content: center; }
.tool:nth-of-type(2) { margin-left: 1px; }
.tool:nth-last-of-type(3) { margin-right: 2px; }
.sort { display: flex; align-items: center; padding-left: 16px; color: #707070; }
.sort .t { margin: 0 5px 0 7px; }
.vis { display: flex; align-items: center; padding: 0 16px 0 28px; color: #fff; }
.vis .t { margin: 0 6px 0 8px; }
.vis > svg:last-child { color: #aaa; }
.more { margin-left: 16px; }
.addr { height: 55px; display: flex; align-items: center; }
.xnav { width: 137px; padding-left: 15px; display: flex; align-items: center; gap: 24px; color: #999; }
.xnav > :nth-child(3) { margin: 0 -4px; }
.abox { width: 1557px; height: 35px; border: 1px solid #535353; display: flex; align-items: center; padding: 0 10px 0 8px; }
.abox > :nth-child(2) { margin: 0 8px 0 7px; }
.ac { margin: 0 24px 0 auto; }
.sbox { width: 202px; height: 35px; border: 1px solid #535353; margin-left: 12px; display: flex; align-items: center; padding-left: 13px; color: #808080; }
.sbox .t { margin-left: 14px; }
.body { height: 877px; display: flex; }
.side { width: 159px; border-right: 2px solid #2b2b2b; padding: 10px 1px 0 2px; overflow: hidden; }
.root { height: 32px; display: flex; align-items: center; padding-left: 8px; color: #fff; }
.cur { height: 28px; margin: 2px 0; background: #333; border-radius: 2px; padding-left: 7px; color: #ddd; }
.root > :nth-child(2) { margin: 0 5px 0 12px; }
.root .t { color: #fff; }
.far { height: 40px; color: #888; padding-left: 9px; }
.far > :nth-child(2) { margin-left: 13px; }
.kid + .far { margin-top: 4px; }
.kid { height: 32px; display: flex; align-items: center; padding-left: 36px; overflow: hidden; }
.ki { width: 16px; margin-right: 5px; display: flex; justify-content: center; }
.pin { margin-left: auto; margin-right: 2px; }
.main { width: 1743px; padding: 9px 0 0 7px; }
.gh { height: 20px; display: flex; align-items: center; color: #777; margin-right: 6px; }
.gh .t { font-size: 15px; line-height: 20px; margin: 0 8px 0 5px; color: #fff; }
.gh i { flex: 1; height: 1px; background: #2e2e2e; }
.grid { display: grid; grid-template-columns: repeat(7, 228px); grid-auto-rows: 64px; padding: 14px 0 0 31px; height: 151px; }
.fo { display: flex; padding-top: 6px; }
.ft { margin: -6px 0 0 8px; display: flex; flex-direction: column; align-items: flex-start; }
.ft .t { height: 16px; }
.ft svg { margin-top: 1px; }
.sub { color: #d2d2d2; }
.rows { padding: 12px 0 0 8px; }
.row { height: 31px; margin-bottom: 4px; width: 1728px; display: flex; align-items: center; padding-left: 20px; border-radius: 2px; border: 1px solid transparent; }
.pick { background: #333; }
.ri { width: 24px; }
.rn { width: 486px; padding-left: 8px; }
.xs { width: 2px; height: 850px; margin: 17px 0 0 10px; background: #9a9a9a; border-radius: 1px; }
.stat { height: 23px; background: #1c1c1c; display: flex; align-items: center; padding-left: 14px; color: #dcdcdc; }
.stat i { width: 1px; height: 11px; background: #fff; margin: 0 11px 0 10px; }
.kb { margin-left: 7px; }
.lay { margin-left: auto; display: flex; gap: 10px; padding-right: 8px; }
</style>
